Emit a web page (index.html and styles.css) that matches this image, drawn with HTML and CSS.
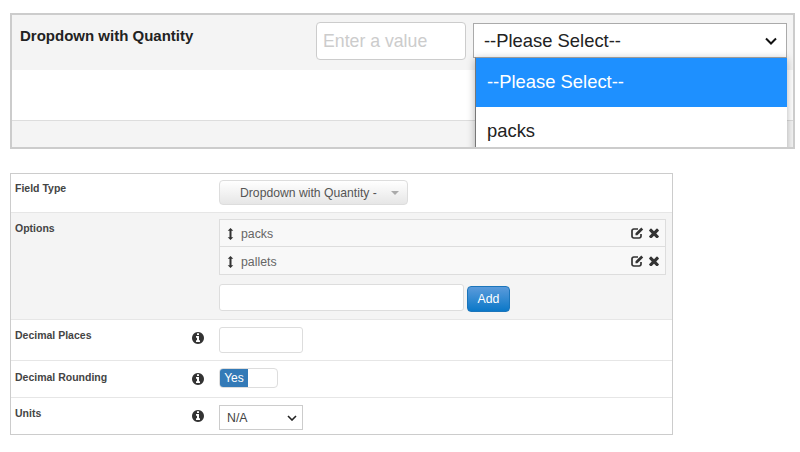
FILE: index.html
```html
<!DOCTYPE html>
<html lang="en">

<head>
    <meta charset="UTF-8">
    <title>Dropdown with Quantity</title>
    <link rel="stylesheet" href="styles.css">
</head>

<body>

    <svg class="defs">
        <symbol id="ico-info" viewBox="0 0 1536 1536">
            <path transform="translate(0 -128)" d="M1024 1376v-160q0-14-9-23t-23-9h-96v-512q0-14-9-23t-23-9h-320q-14 0-23 9t-9 23v160q0 14 9 23t23 9h96v320h-96q-14 0-23 9t-9 23v160q0 14 9 23t23 9h448q14 0 23-9t9-23zm-128-896v-160q0-14-9-23t-23-9h-192q-14 0-23 9t-9 23v160q0 14 9 23t23 9h192q14 0 23-9t9-23zm640 416q0 209-103 385.5t-279.5 279.5-385.5 103-385.5-103-279.5-279.5-103-385.5 103-385.5 279.5-279.5 385.5-103 385.5 103 279.5 279.5 103 385.5z" />
        </symbol>
        <symbol id="ico-times" viewBox="100 250 1208 1208">
            <path d="M1298 1322q0 40-28 68l-136 136q-28 28-68 28t-68-28l-294-294-294 294q-28 28-68 28t-68-28l-136-136q-28-28-28-68t28-68l294-294-294-294q-28-28-28-68t28-68l136-136q28-28 68-28t68 28l294 294 294-294q28-28 68-28t68 28l136 136q28 28 28 68t-28 68l-294 294 294 294q28 28 28 68z" transform="translate(0 -50)" />
        </symbol>
        <symbol id="ico-edit" viewBox="0 0 13 12">
            <path d="M10 7v2.2A1.8 1.8 0 0 1 8.2 11H2.800A1.800 1.800 0 0 1 1 9.200V3.800A1.800 1.800 0 0 1 2.800 2H7" fill="none" stroke="currentColor" stroke-width="1.700" />
            <path d="M4.500 6.300 10.300.6l1.900 1.900L6.400 8.200H4.500z" />
        </symbol>
        <symbol id="ico-move" viewBox="0 0 7 13">
            <path d="M3.500 0 6.500 3H4.600v7h1.900l-3 3-3-3h1.900V3H.5z" />
        </symbol>
    </svg>

    <section class="preview">
        <div class="preview-head">
            <h2>Dropdown with Quantity</h2>
            <input class="qty" type="text" placeholder="Enter a value">
            <select class="unit">
                <option>--Please Select--</option>
                <option>packs</option>
            </select>
        </div>
        <div class="preview-body"></div>
        <div class="preview-foot"></div>

        <ul class="unit-list">
            <li class="valgt">--Please Select--</li>
            <li>packs</li>
        </ul>
    </section>

    <section class="settings">

        <div class="row row-type">
            <label>Field Type</label>
            <span></span>
            <div class="field">
                <button class="type-btn">Dropdown with Quantity - <i class="caret"></i></button>
            </div>
        </div>

        <div class="row row-options">
            <label>Options</label>
            <span></span>
            <div class="field">
                <div class="option">
                    <svg class="ico-move"><use href="#ico-move" /></svg>
                    <span class="option-name">packs</span>
                    <svg class="ico-edit"><use href="#ico-edit" /></svg>
                    <svg class="ico-times"><use href="#ico-times" /></svg>
                </div>
                <div class="option">
                    <svg class="ico-move"><use href="#ico-move" /></svg>
                    <span class="option-name">pallets</span>
                    <svg class="ico-edit"><use href="#ico-edit" /></svg>
                    <svg class="ico-times"><use href="#ico-times" /></svg>
                </div>
                <div class="add-line">
                    <input class="add-input" type="text">
                    <button class="add-btn">Add</button>
                </div>
            </div>
        </div>

        <div class="row row-places">
            <label>Decimal Places</label>
            <svg class="ico-info"><use href="#ico-info" /></svg>
            <div class="field">
                <input class="places" type="text">
            </div>
        </div>

        <div class="row row-rounding">
            <label>Decimal Rounding</label>
            <svg class="ico-info"><use href="#ico-info" /></svg>
            <div class="field">
                <div class="toggle"><span class="toggle-on">Yes</span></div>
            </div>
        </div>

        <div class="row row-units">
            <label>Units</label>
            <svg class="ico-info"><use href="#ico-info" /></svg>
            <div class="field">
                <select class="units">
                    <option>N/A</option>
                </select>
            </div>
        </div>

    </section>

</body>

</html>
```

FILE: styles.css
```css
body {
    margin: 0;
    font-family: "Liberation Sans", Arial, sans-serif;
    color: #333;
    background-color: #fff;
}

.defs {
    display: none;
}

/* top preview */
.preview {
    position: relative;
    box-sizing: border-box;
    width: 785px;
    height: 136px;
    margin: 13px 0 0 10px;
    border: 2px solid #ccc;
    overflow: hidden;
}

.preview-head {
    display: flex;
    align-items: flex-start;
    height: 55px;
    background-color: #f4f4f4;
}

.preview-head h2 {
    width: 296px;
    margin: 12px 0 0 8px;
    font-size: 15px;
    line-height: 17px;
    color: #222;
}

.qty {
    box-sizing: border-box;
    width: 150px;
    height: 38px;
    margin: 7px 7px 0 0;
    padding: 0 6px;
    border: 1px solid #ccc;
    border-radius: 4px;
    font-family: inherit;
    font-size: 17.7px;
}

.qty::placeholder {
    color: #ccc;
}

.unit {
    box-sizing: border-box;
    width: 314px;
    height: 35px;
    margin-top: 8px;
    padding-left: 10px;
    border: 1px solid #aaa;
    border-radius: 0;
    appearance: none;
    background: #fff url("data:image/svg+xml,%3Csvg xmlns='http://www.w3.org/2000/svg' width='12' height='8'%3E%3Cpath d='M1 1.500l5 5 5-5' fill='none' stroke='%23111' stroke-width='2'/%3E%3C/svg%3E") no-repeat right 9px center;
    font-family: inherit;
    font-size: 18.4px;
    color: #222;
}

.preview-body {
    height: 50px;
    background-color: #fff;
    border-bottom: 1px solid #ddd;
}

.preview-foot {
    height: 28px;
    background-color: #f4f4f4;
}

.unit-list {
    position: absolute;
    top: 42px;
    left: 463px;
    width: 311px;
    margin: 0;
    padding: 0;
    list-style: none;
    border-left: 1px solid #777;
    border-top: 1px solid #999;
    background-color: #fff;
    box-shadow: 0 2px 8px rgba(0, 0, 0, .3);
    font-size: 18.4px;
    color: #222;
}

.unit-list li {
    height: 49px;
    padding-left: 11px;
    line-height: 47px;
}

.unit-list .valgt {
    background-color: #1e90ff;
    color: #fff;
}

/* settings table */
.settings {
    box-sizing: border-box;
    width: 663px;
    margin: 24px 0 0 10px;
    border: 1px solid #ccc;
    font-size: 12.3px;
}

.row {
    display: grid;
    grid-template-columns: 170px 24px 1fr;
    padding-left: 4px;
    border-bottom: 1px solid #e6e6e6;
}

.row:last-child {
    border-bottom: 0;
}

.row label {
    font-size: 10.5px;
    font-weight: bold;
    color: #444;
    line-height: 13px;
}

.field {
    padding-left: 10px;
}

.row-type {
    height: 38px;
}

.row-type label {
    margin-top: 8px;
}

.row-type .field {
    padding-top: 6px;
}

.type-btn {
    box-sizing: border-box;
    width: 189px;
    height: 25px;
    padding: 0 0 0 20px;
    border: 1px solid #ddd;
    border-radius: 4px;
    background: linear-gradient(#fff, #e6e6e6);
    font-family: inherit;
    font-size: 12.2px;
    color: #555;
    text-align: left;
}

.caret {
    display: inline-block;
    margin-left: 11px;
    vertical-align: middle;
    border-top: 4px solid #aaa;
    border-left: 4px solid transparent;
    border-right: 4px solid transparent;
}

.row-options {
    height: 106px;
    background-color: #f4f4f4;
}

.row-options label {
    margin-top: 9px;
}

.row-options .field {
    padding-top: 6px;
    padding-right: 6px;
}

.option {
    box-sizing: border-box;
    display: flex;
    align-items: center;
    height: 28px;
    padding: 2px 6px 0 7px;
    border: 1px solid #ddd;
    background-color: #f8f8f8;
    color: #666;
}

.option+.option {
    border-top: 0;
}

.option-name {
    flex: 1;
    margin-left: 7px;
}

.ico-move {
    width: 7px;
    height: 12px;
    fill: #333;
}

.ico-edit {
    width: 13px;
    height: 12px;
    fill: #333;
    color: #333;
    margin: -2px 5px 0 0;
}

.ico-times {
    width: 10px;
    height: 10px;
    fill: #333;
    margin-top: -2px;
}

.add-line {
    display: flex;
    align-items: flex-start;
    margin-top: 9px;
}

.add-input {
    box-sizing: border-box;
    width: 245px;
    height: 27px;
    border: 1px solid #ddd;
    border-radius: 3px;
}

.add-btn {
    width: 43px;
    height: 26px;
    margin: 2px 0 0 3px;
    padding: 0;
    border: 1px solid #1b75bb;
    border-radius: 4px;
    background: linear-gradient(#5b9bdb, #0b78c8);
    font-family: inherit;
    font-size: 12.3px;
    color: #fff;
}

.ico-info {
    width: 12px;
    height: 12px;
    margin-left: 1px;
    fill: #333;
    justify-self: center;
}

.row-places {
    height: 40px;
}

.row-places label {
    margin-top: 9px;
}

.row-places .ico-info {
    margin-top: 12px;
}

.row-places .field {
    padding-top: 7px;
}

.places {
    box-sizing: border-box;
    width: 84px;
    height: 26px;
    border: 1px solid #ddd;
    border-radius: 3px;
}

.row-rounding {
    height: 36px;
}

.row-rounding label {
    margin-top: 10px;
}

.row-rounding .ico-info {
    margin-top: 12px;
}

.row-rounding .field {
    padding-top: 7px;
}

.toggle {
    box-sizing: border-box;
    width: 59px;
    height: 20px;
    border: 1px solid #ddd;
    border-radius: 4px;
    overflow: hidden;
    background-color: #fff;
}

.toggle-on {
    display: block;
    width: 28px;
    height: 18px;
    background-color: #337ab7;
    color: #fff;
    font-size: 12px;
    line-height: 18px;
    text-align: center;
}

.row-units {
    height: 36px;
}

.row-units label {
    margin-top: 9px;
}

.row-units .ico-info {
    margin-top: 12px;
}

.row-units .field {
    padding-top: 7px;
}

.units {
    box-sizing: border-box;
    width: 84px;
    height: 25px;
    padding-left: 7px;
    border: 1px solid #ccc;
    border-radius: 0;
    appearance: none;
    background: #fff url("data:image/svg+xml,%3Csvg xmlns='http://www.w3.org/2000/svg' width='10' height='6'%3E%3Cpath d='M1 1l4 4 4-4' fill='none' stroke='%23222' stroke-width='1.600'/%3E%3C/svg%3E") no-repeat right 5px center;
    font-family: inherit;
    font-size: 12.3px;
    color: #444;
}
```
